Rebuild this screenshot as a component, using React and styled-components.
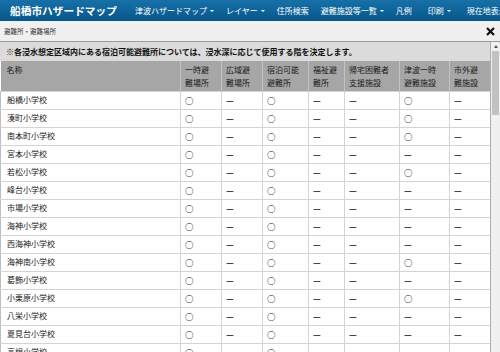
import React from 'react';
import styled, { createGlobalStyle } from 'styled-components';

const GlobalStyle = createGlobalStyle`
  html, body {
    margin: 0;
    padding: 0;
    background: #ffffff;
    font-family: "Noto Sans CJK JP", "Noto Sans", sans-serif;
    overflow: hidden;
  }
`;

const Page = styled.div`
  width: 500px;
  height: 352px;
  display: flex;
  flex-direction: column;
  overflow: hidden;
`;

const TopBar = styled.div`
  height: 21px;
  flex: none;
  display: flex;
  align-items: center;
  background: linear-gradient(#1671a8, #06568a);
  color: #ffffff;
  white-space: nowrap;
  overflow: hidden;
`;

const Brand = styled.div`
  padding-left: 10px;
  font-size: 10.7px;
  font-weight: 700;
`;

const Nav = styled.div`
  display: flex;
  align-items: center;
  gap: 12px;
  margin-left: 18px;
  font-size: 8px;
`;

const NavItem = styled.div`
  display: flex;
  align-items: center;
  margin-right: ${(p) => (p.$extra ? 4 : 0)}px;
`;

const Caret = styled.span`
  margin-left: 3px;
  width: 0;
  height: 0;
  border-left: 2px solid transparent;
  border-right: 2px solid transparent;
  border-top: 2.5px solid #ffffff;
`;

const PanelHead = styled.div`
  height: 21px;
  flex: none;
  display: flex;
  align-items: center;
  justify-content: space-between;
  padding: 0 4px;
  background: #f0f0f0;
  border-bottom: 1px solid #9a9a9a;
  box-sizing: border-box;
`;

const Crumb = styled.div`
  font-size: 6.5px;
  color: #333333;
`;

const Close = styled.div`
  display: flex;
  width: 9px;
  height: 9px;
  margin-right: 1px;
`;

const PanelBody = styled.div`
  flex: 1;
  display: flex;
  min-height: 0;
`;

const ScrollArea = styled.div`
  width: 490px;
  overflow: hidden;
`;

const Note = styled.div`
  height: 19px;
  display: flex;
  align-items: center;
  padding-left: 6px;
  background: #dbdbdb;
  font-size: 8px;
  font-weight: 700;
  color: #111111;
  white-space: nowrap;
`;

const Table = styled.table`
  width: 490px;
  table-layout: fixed;
  border-collapse: collapse;
`;

const Th = styled.th`
  height: 30px;
  padding: 3px 0 0 ${(p) => (p.$name ? 6 : 4)}px;
  box-sizing: border-box;
  background: #a6a6a6;
  border-right: 1px solid #c3c3c3;
  text-align: left;
  vertical-align: top;
  font-size: 8px;
  line-height: 12.5px;
  font-weight: 400;
  color: #1a1a1a;
`;

const Row = styled.tr`
  height: 18px;
`;

const Td = styled.td`
  padding: 0 0 0 ${(p) => (p.$name ? 6 : 4)}px;
  border: 1px solid #d4d4d4;
  border-left-color: ${(p) => (p.$name ? '#bdbdbd' : '#d4d4d4')};
  font-size: 8px;
  line-height: 16px;
  color: #1a1a1a;
  white-space: nowrap;
  overflow: hidden;
`;

const Mark = styled.span`
  font-size: 8.5px;
  font-weight: 700;
  color: #222222;
`;

const ScrollBar = styled.div`
  width: 10px;
  flex: none;
  display: flex;
  flex-direction: column;
  align-items: center;
  background: #f0f0f0;
  border-left: 1px solid #acacac;
  box-sizing: border-box;
`;

const Arrow = styled.div`
  margin-top: 3px;
  width: 0;
  height: 0;
  border-left: 2.5px solid transparent;
  border-right: 2.5px solid transparent;
  border-bottom: 3px solid #555555;
`;

const Thumb = styled.div`
  margin-top: 3px;
  width: 7px;
  height: 64px;
  background: #c1c1c1;
`;

const navItems = [
  { label: '津波ハザードマップ', menu: true },
  { label: 'レイヤー', menu: true },
  { label: '住所検索' },
  { label: '避難施設等一覧', menu: true },
  { label: '凡例', extra: true },
  { label: '印刷', menu: true, extra: true },
  { label: '現在地表示' }
];

const columns = [
  { label: '名称', width: 180, name: true },
  { label: ['一時避', '難場所'], width: 41 },
  { label: ['広域避', '難場所'], width: 41 },
  { label: ['宿泊可能', '避難所'], width: 46 },
  { label: ['福祉避', '難所'], width: 36 },
  { label: ['帰宅困難者', '支援施設'], width: 55 },
  { label: ['津波一時', '避難施設'], width: 50 },
  { label: ['市外避', '難施設'], width: 41 }
];

// 1 = ○, 0 = —
const schools = [
  ['船橋小学校', 1, 0, 1, 0, 0, 1, 0],
  ['湊町小学校', 1, 0, 1, 0, 0, 1, 0],
  ['南本町小学校', 1, 0, 1, 0, 0, 1, 0],
  ['宮本小学校', 1, 0, 1, 0, 0, 0, 0],
  ['若松小学校', 1, 0, 1, 0, 0, 1, 0],
  ['峰台小学校', 1, 0, 1, 0, 0, 0, 0],
  ['市場小学校', 1, 0, 1, 0, 0, 0, 0],
  ['海神小学校', 1, 0, 1, 0, 0, 0, 0],
  ['西海神小学校', 1, 0, 1, 0, 0, 0, 0],
  ['海神南小学校', 1, 0, 1, 0, 0, 1, 0],
  ['葛飾小学校', 1, 0, 1, 0, 0, 0, 0],
  ['小栗原小学校', 1, 0, 1, 0, 0, 1, 0],
  ['八栄小学校', 1, 0, 1, 0, 0, 0, 0],
  ['夏見台小学校', 1, 0, 1, 0, 0, 0, 0],
  ['高根小学校', 1, 0, 1, 0, 0, 0, 0]
];

function App() {
  return (
    <Page>
      <GlobalStyle />
      <TopBar>
        <Brand>船橋市ハザードマップ</Brand>
        <Nav>
          {navItems.map((item) => (
            <NavItem key={item.label} $extra={item.extra}>
              {item.label}
              {item.menu && <Caret />}
            </NavItem>
          ))}
        </Nav>
      </TopBar>
      <PanelHead>
        <Crumb>避難所・避難場所</Crumb>
        <Close>
          <svg width="9" height="9" viewBox="0 0 9 9">
            <path d="M1 1 L8 8 M8 1 L1 8" stroke="#111" strokeWidth="2.2" />
          </svg>
        </Close>
      </PanelHead>
      <PanelBody>
        <ScrollArea>
          <Note>
            ※各浸水想定区域内にある宿泊可能避難所については、浸水深に応じて使用する階を決定します。
          </Note>
          <Table>
            <colgroup>
              {columns.map((col, index) => (
                <col key={index} style={{ width: col.width }} />
              ))}
            </colgroup>
            <thead>
              <tr>
                {columns.map((col, index) => (
                  <Th key={index} $name={col.name}>
                    {Array.isArray(col.label)
                      ? col.label.map((line) => <div key={line}>{line}</div>)
                      : col.label}
                  </Th>
                ))}
              </tr>
            </thead>
            <tbody>
              {schools.map(([name, ...marks]) => (
                <Row key={name}>
                  <Td $name>{name}</Td>
                  {marks.map((mark, index) => (
                    <Td key={index}>
                      <Mark>{mark ? '○' : '—'}</Mark>
                    </Td>
                  ))}
                </Row>
              ))}
            </tbody>
          </Table>
        </ScrollArea>
        <ScrollBar>
          <Arrow />
          <Thumb />
        </ScrollBar>
      </PanelBody>
    </Page>
  );
}

export default App;
